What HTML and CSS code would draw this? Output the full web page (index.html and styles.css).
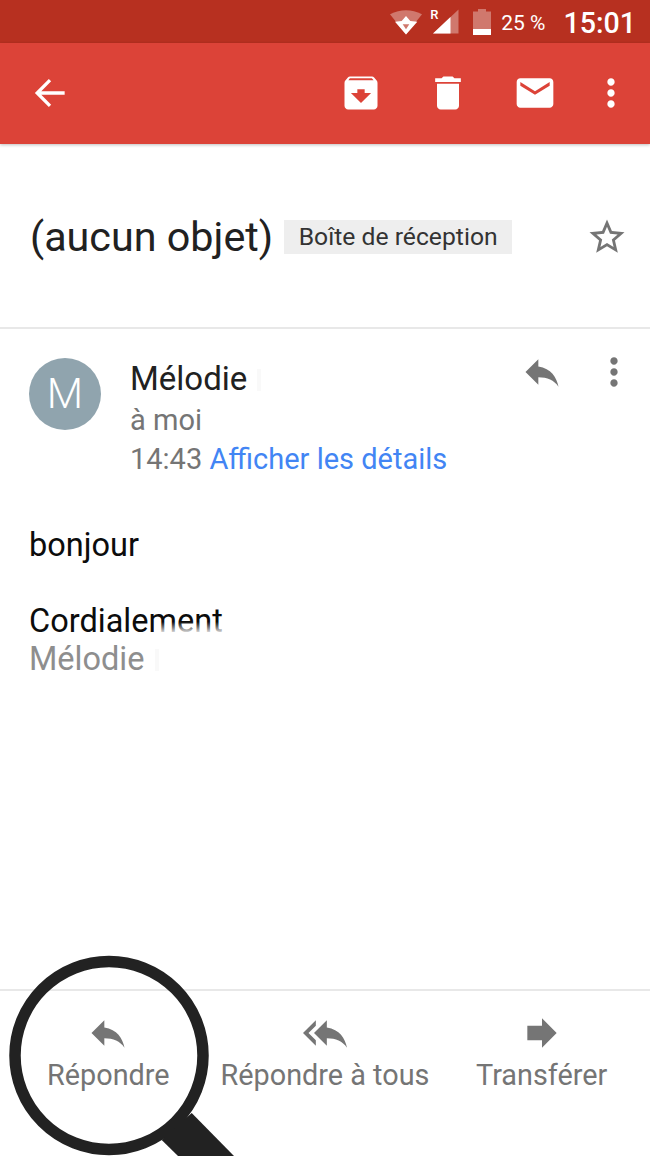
FILE: index.html
```html
<!DOCTYPE html>
<html lang="fr">
<head>
  <meta charset="UTF-8" />
  <title>Gmail - aucun objet</title>
  <link rel="stylesheet" href="styles.css">
</head>
<body>

  <div class="statusbar">
    <svg class="wifi" width="32" height="26" viewBox="0 0 32 26">
      <path d="M0 5.300Q16 -3 32 5.300L16 25.500z" fill="#fff" opacity="0.35"/>
      <path fill="#fff" fill-rule="evenodd" d="M5 12.700L11.700 12 16 7l4.300 5 7 .7L16 25.500zM12.700 15.300h6.600L16 20.300z"/>
    </svg>
    <div class="signal">
      <span class="roaming">R</span>
      <svg width="26" height="25" viewBox="0 0 26 25">
        <path d="M0 24.500L25.500 .5V24.500z" fill="#fff" opacity="0.35"/>
        <path d="M0 24.500L17.500 8V24.500z" fill="#fff"/>
      </svg>
    </div>
    <svg class="battery" width="18" height="26" viewBox="0 0 18 26">
      <path d="M5 0h8v2.500h5V20H0V2.500h5z" fill="#fff" opacity="0.35"/>
      <rect x="0" y="20" width="18" height="6" fill="#fff"/>
    </svg>
    <span class="percent">25 %</span>
    <span class="clock">15:01</span>
  </div>

  <div class="toolbar">
    <svg class="icon back" viewBox="0 0 24 24"><path d="M20 12H5M12 5l-7 7 7 7" fill="none" stroke="#fff" stroke-width="1.800"/></svg>
    <div class="actions">
      <svg class="icon" viewBox="0 0 24 24"><path fill="#fff" d="M20.540 5.230l-1.390-1.680C18.880 3.210 18.470 3 18 3H6c-.47 0-.88.21-1.160.55L3.460 5.230C3.170 5.570 3 6.020 3 6.500V19c0 1.100.9 2 2 2h14c1.100 0 2-.9 2-2V6.500c0-.48-.17-.93-.46-1.270zM12 17.500L6.500 12H10v-2h4v2h3.500L12 17.500zM5.120 5l.81-1h12l.94 1H5.120z"/></svg>
      <svg class="icon" viewBox="0 0 24 24"><path fill="#fff" d="M6 19c0 1.100.9 2 2 2h8c1.100 0 2-.9 2-2V7H6v12zM19 4h-3.500l-1-1h-5l-1 1H5v2h14V4z"/></svg>
      <svg class="icon" viewBox="0 0 24 24"><path fill="#fff" d="M20 4H4c-1.100 0-1.990.9-1.990 2L2 18c0 1.100.9 2 2 2h16c1.100 0 2-.9 2-2V6c0-1.100-.9-2-2-2zm0 4l-8 5-8-5V6l8 5 8-5v2z"/></svg>
      <svg class="icon more" viewBox="0 0 24 24"><path fill="#fff" d="M12 8c1.100 0 2-.9 2-2s-.9-2-2-2-2 .9-2 2 .9 2 2 2zm0 2c-1.100 0-2 .9-2 2s.9 2 2 2 2-.9 2-2-.9-2-2-2zm0 6c-1.100 0-2 .9-2 2s.9 2 2 2 2-.9 2-2-.9-2-2-2z"/></svg>
    </div>
  </div>

  <div class="subject">
    <h1>(aucun objet)</h1>
    <span class="label">Boîte de réception</span>
    <svg class="star" viewBox="0 0 24 24"><path fill="#757575" d="M22 9.240l-7.190-.62L12 2 9.190 8.630 2 9.240l5.460 4.730L5.820 21 12 17.270 18.180 21l-1.630-7.030L22 9.240zM12 15.400l-3.760 2.270 1-4.280-3.320-2.880 4.380-.38L12 6.100l1.710 4.040 4.380.38-3.320 2.880 1 4.280L12 15.400z"/></svg>
  </div>

  <div class="message">
    <div class="sender">
      <div class="avatar">M</div>
      <div class="meta">
        <div class="name">Mélodie <span class="hidden-mark"></span></div>
        <div class="to">à moi</div>
        <div class="when">14:43 <a class="details">Afficher les détails</a></div>
      </div>
      <svg class="icon reply" viewBox="0 0 24 24"><path fill="#757575" d="M10 9V5l-7 7 7 7v-4.100c5 0 8.500 1.600 11 5.100-1-5-4-10-11-11z"/></svg>
      <svg class="icon more-grey" viewBox="0 0 24 24"><path fill="#757575" d="M12 8c1.100 0 2-.9 2-2s-.9-2-2-2-2 .9-2 2 .9 2 2 2zm0 2c-1.100 0-2 .9-2 2s.9 2 2 2 2-.9 2-2-.9-2-2-2zm0 6c-1.100 0-2 .9-2 2s.9 2 2 2 2-.9 2-2-.9-2-2-2z"/></svg>
    </div>
    <div class="body">
      <p class="hello">bonjour</p>
      <p class="closing">Cordialement<span class="fade"></span></p>
      <p class="signature">Mélodie <span class="hidden-mark"></span></p>
    </div>
  </div>

  <div class="footer">
    <div class="foot-btn">
      <svg class="icon" viewBox="0 0 24 24"><path fill="#757575" d="M10 9V5l-7 7 7 7v-4.100c5 0 8.500 1.600 11 5.100-1-5-4-10-11-11z"/></svg>
      <span>Répondre</span>
    </div>
    <div class="foot-btn">
      <svg class="icon" viewBox="0 0 24 24"><path fill="#757575" d="M7 8V5l-7 7 7 7v-3l-4-4 4-4zm6 1V5l-7 7 7 7v-4.100c5 0 8.500 1.600 11 5.100-1-5-4-10-11-11z"/></svg>
      <span>Répondre à tous</span>
    </div>
    <div class="foot-btn">
      <svg class="icon" viewBox="0 0 24 24"><path fill="#757575" d="M12 8V4l8 8-8 8v-4H4V8z"/></svg>
      <span>Transférer</span>
    </div>
  </div>

  <svg class="magnifier" width="240" height="206" viewBox="0 950 240 206">
    <circle cx="109" cy="1055.500" r="94" fill="none" stroke="#222" stroke-width="11.500"/>
    <path d="M191.700 1113L234 1156H178L161.700 1140z" fill="#222"/>
  </svg>

</body>
</html>
```

FILE: styles.css
```css
* {
  box-sizing: border-box;
}

html, body {
  margin: 0;
  height: 1156px;
  overflow: hidden;
}

body {
  position: relative;
  display: flex;
  flex-direction: column;
  font-family: Roboto, "Noto Sans", sans-serif;
  background: #fff;
  color: #212121;
}

.icon {
  width: 44px;
  height: 44px;
  flex: none;
  display: block;
}

/* status bar */
.statusbar {
  height: 43px;
  flex: none;
  background: #b73020;
  color: #fff;
  display: flex;
  align-items: center;
  justify-content: flex-end;
  padding-right: 14px;
}

.wifi {
  margin-right: 11px;
}

.signal {
  position: relative;
  width: 26px;
  height: 25px;
  margin-right: 14px;
}

.signal svg {
  display: block;
}

.roaming {
  position: absolute;
  left: -3px;
  top: -1px;
  font-size: 13px;
  line-height: 14px;
  font-weight: 500;
}

.battery {
  margin-right: 10px;
}

.percent {
  font-size: 21px;
  margin-right: 18px;
  margin-top: 2px;
}

.clock {
  font-size: 28.600px;
  font-weight: 500;
  margin-top: 2px;
}

/* toolbar */
.toolbar {
  height: 101px;
  flex: none;
  background: #dc4338;
  box-shadow: 0 1px 3px rgba(0, 0, 0, 0.25);
  display: flex;
  align-items: center;
  justify-content: space-between;
  padding: 0 17px 2px 28px;
}

.actions {
  display: flex;
  gap: 43px;
}

.actions .more {
  margin-left: -11px;
}

/* subject */
.subject {
  height: 185px;
  flex: none;
  display: flex;
  align-items: center;
  padding: 3px 22px 0 30px;
  border-bottom: 2px solid #e8e8e8;
}

.subject h1 {
  margin: 0;
  font-size: 41.300px;
  font-weight: 400;
  white-space: nowrap;
}

.label {
  margin-left: 11px;
  padding: 0 14.500px;
  height: 34px;
  line-height: 34px;
  font-size: 24.700px;
  background: #eeeeee;
  color: #333;
  white-space: nowrap;
}

.star {
  width: 42px;
  height: 42px;
  margin-left: auto;
}

/* message */
.message {
  flex: 1;
  padding: 29px 0 0 29px;
}

.sender {
  display: flex;
  align-items: flex-start;
}

.avatar {
  width: 72px;
  height: 72px;
  flex: none;
  border-radius: 50%;
  background: #90a4ae;
  color: #fff;
  font-size: 42px;
  font-weight: 300;
  line-height: 72px;
  text-align: center;
}

.meta {
  margin-left: 29px;
  margin-top: -1px;
  font-size: 29px;
  line-height: 39px;
  color: #757575;
  width: 397px;
}

.name {
  color: #212121;
  font-size: 33px;
  line-height: 44px;
}

.hidden-mark {
  display: inline-block;
  width: 4px;
  height: 22px;
  margin-left: 2px;
  vertical-align: -1px;
  background: #f9f9f9;
}

.details {
  color: #4285f4;
}

.reply {
  margin-top: -8px;
  margin-left: -7px;
}

.more-grey {
  margin-left: 28px;
  margin-top: -8px;
}

.body {
  margin-top: 47px;
  font-size: 32.500px;
  line-height: 38px;
  color: #0c0c0c;
}

.body p {
  margin: 0;
}

.hello {
  padding-bottom: 38px;
}

.closing {
  position: relative;
  width: max-content;
}

.fade {
  position: absolute;
  left: 125px;
  right: -4px;
  top: 0;
  bottom: 0;
  background: linear-gradient(to bottom, rgba(255, 255, 255, 0) 52%, rgba(255, 255, 255, 0.85) 80%);
}

.signature {
  color: #8e8e8e;
}

/* bottom actions */
.footer {
  height: 167px;
  flex: none;
  border-top: 2px solid #e8e8e8;
  display: grid;
  grid-template-columns: repeat(3, 1fr);
  padding-top: 20px;
  color: #757575;
}

.foot-btn {
  display: flex;
  flex-direction: column;
  align-items: center;
  font-size: 28.800px;
  line-height: 38px;
}

.foot-btn span {
  margin-top: 1px;
  white-space: nowrap;
}

/* lens drawn over the screenshot */
.magnifier {
  position: absolute;
  left: 0;
  top: 950px;
}
```
